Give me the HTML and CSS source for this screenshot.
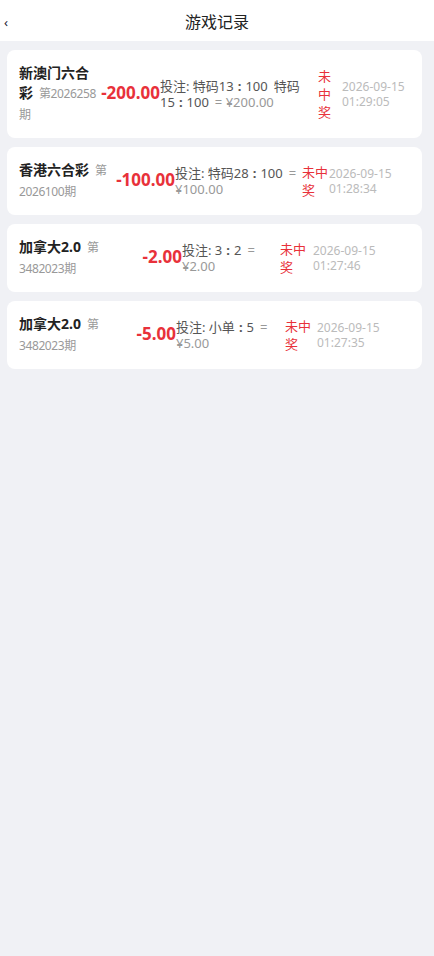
FILE: index.html
```html
<!DOCTYPE html>
<html lang="zh-CN">
<head>
  <meta charset="UTF-8" />
  <meta name="viewport" content="width=device-width, initial-scale=1.0"/>
  <title>游戏记录</title>
<link rel="stylesheet" href="styles.css">
</head>
<body>

<div class="nav-bar">
  <span class="nav-back">&lsaquo;</span>
  <span class="nav-title">游戏记录</span>
  <span></span>
</div>

<div class="record-list">
  <div class="record rec-1">
    <div class="rec-name">新澳门六合彩<span class="rec-issue">第2026258期</span></div>
    <div class="rec-amount">-200.00</div>
    <div class="rec-bet"><span class="bet-item">投注: 特码13<span class="colon">:</span>100</span><span class="bet-item">特码15<span class="colon">:</span>100</span><span class="bet-sum">= ¥200.00</span></div>
    <div class="rec-status">未中奖</div>
    <div class="rec-time"><span>2026-09-15</span><span>01:29:05</span></div>
  </div>

  <div class="record rec-2">
    <div class="rec-name">香港六合彩<span class="rec-issue">第2026100期</span></div>
    <div class="rec-amount">-100.00</div>
    <div class="rec-bet"><span class="bet-item">投注: 特码28<span class="colon">:</span>100</span><span class="bet-sum">= ¥100.00</span></div>
    <div class="rec-status">未中奖</div>
    <div class="rec-time"><span>2026-09-15</span><span>01:28:34</span></div>
  </div>

  <div class="record rec-3">
    <div class="rec-name">加拿大2.0<span class="rec-issue">第3482023期</span></div>
    <div class="rec-amount">-2.00</div>
    <div class="rec-bet"><span class="bet-item">投注: 3<span class="colon">:</span>2</span><span class="bet-sum">= ¥2.00</span></div>
    <div class="rec-status">未中奖</div>
    <div class="rec-time"><span>2026-09-15</span><span>01:27:46</span></div>
  </div>

  <div class="record rec-4">
    <div class="rec-name">加拿大2.0<span class="rec-issue">第3482023期</span></div>
    <div class="rec-amount">-5.00</div>
    <div class="rec-bet"><span class="bet-item">投注: 小单<span class="colon">:</span>5</span><span class="bet-sum">= ¥5.00</span></div>
    <div class="rec-status">未中奖</div>
    <div class="rec-time"><span>2026-09-15</span><span>01:27:35</span></div>
  </div>
</div>

</body>
</html>
```

FILE: styles.css
```css
:root {
  --page-bg: #f0f1f5;
  --red: #e8313a;
  --text: #222;
  --muted: #999;
}

body {
  margin: 0;
  min-height: 956px;
  background: var(--page-bg);
  font-family: "Noto Sans", "Noto Sans CJK SC", sans-serif;
  color: var(--text);
}

.nav-bar {
  display: grid;
  grid-template-columns: 1fr auto 1fr;
  align-items: center;
  height: 41px;
  background: #fff;
}

.nav-back {
  padding-left: 4px;
  margin-top: 4px;
  font-size: 13px;
  line-height: 1;
  color: #223;
}

.nav-title {
  font-size: 16px;
  color: #222;
}

.record-list {
  display: flex;
  flex-direction: column;
  gap: 9px;
  padding: 9px 12px 0 7px;
}

.record {
  display: grid;
  align-items: center;
  padding: 13px 12px;
  background: #fff;
  border-radius: 8px;
}

.rec-1 { grid-template-columns: 81px 60px 158px 24px 1fr; }
.rec-2 { grid-template-columns: 90px 66px 127px 27px 1fr; }
.rec-3 { grid-template-columns: 82px 81px 98px 33px 1fr; }
.rec-4 { grid-template-columns: 82px 75px 109px 32px 1fr; }

.rec-name {
  font-size: 14px;
  font-weight: bold;
  line-height: 20px;
  color: #222;
}

.rec-issue {
  margin-left: 6px;
  font-size: 12px;
  font-weight: normal;
  letter-spacing: -0.4px;
  color: var(--muted);
}

.rec-amount {
  justify-self: end;
  margin-bottom: 3px;
  font-size: 17px;
  font-weight: bold;
  color: var(--red);
  white-space: nowrap;
}

.rec-bet {
  font-size: 13px;
  line-height: 16px;
  color: #555;
}

.bet-item {
  margin-right: 6px;
}

.colon {
  margin: 0 4px;
  font-weight: bold;
}

.bet-sum {
  color: #999;
}

.rec-status {
  font-size: 13px;
  line-height: 18px;
  color: var(--red);
}

.rec-time {
  display: flex;
  flex-direction: column;
  font-size: 12px;
  line-height: 15px;
  color: #bbb;
}
```
